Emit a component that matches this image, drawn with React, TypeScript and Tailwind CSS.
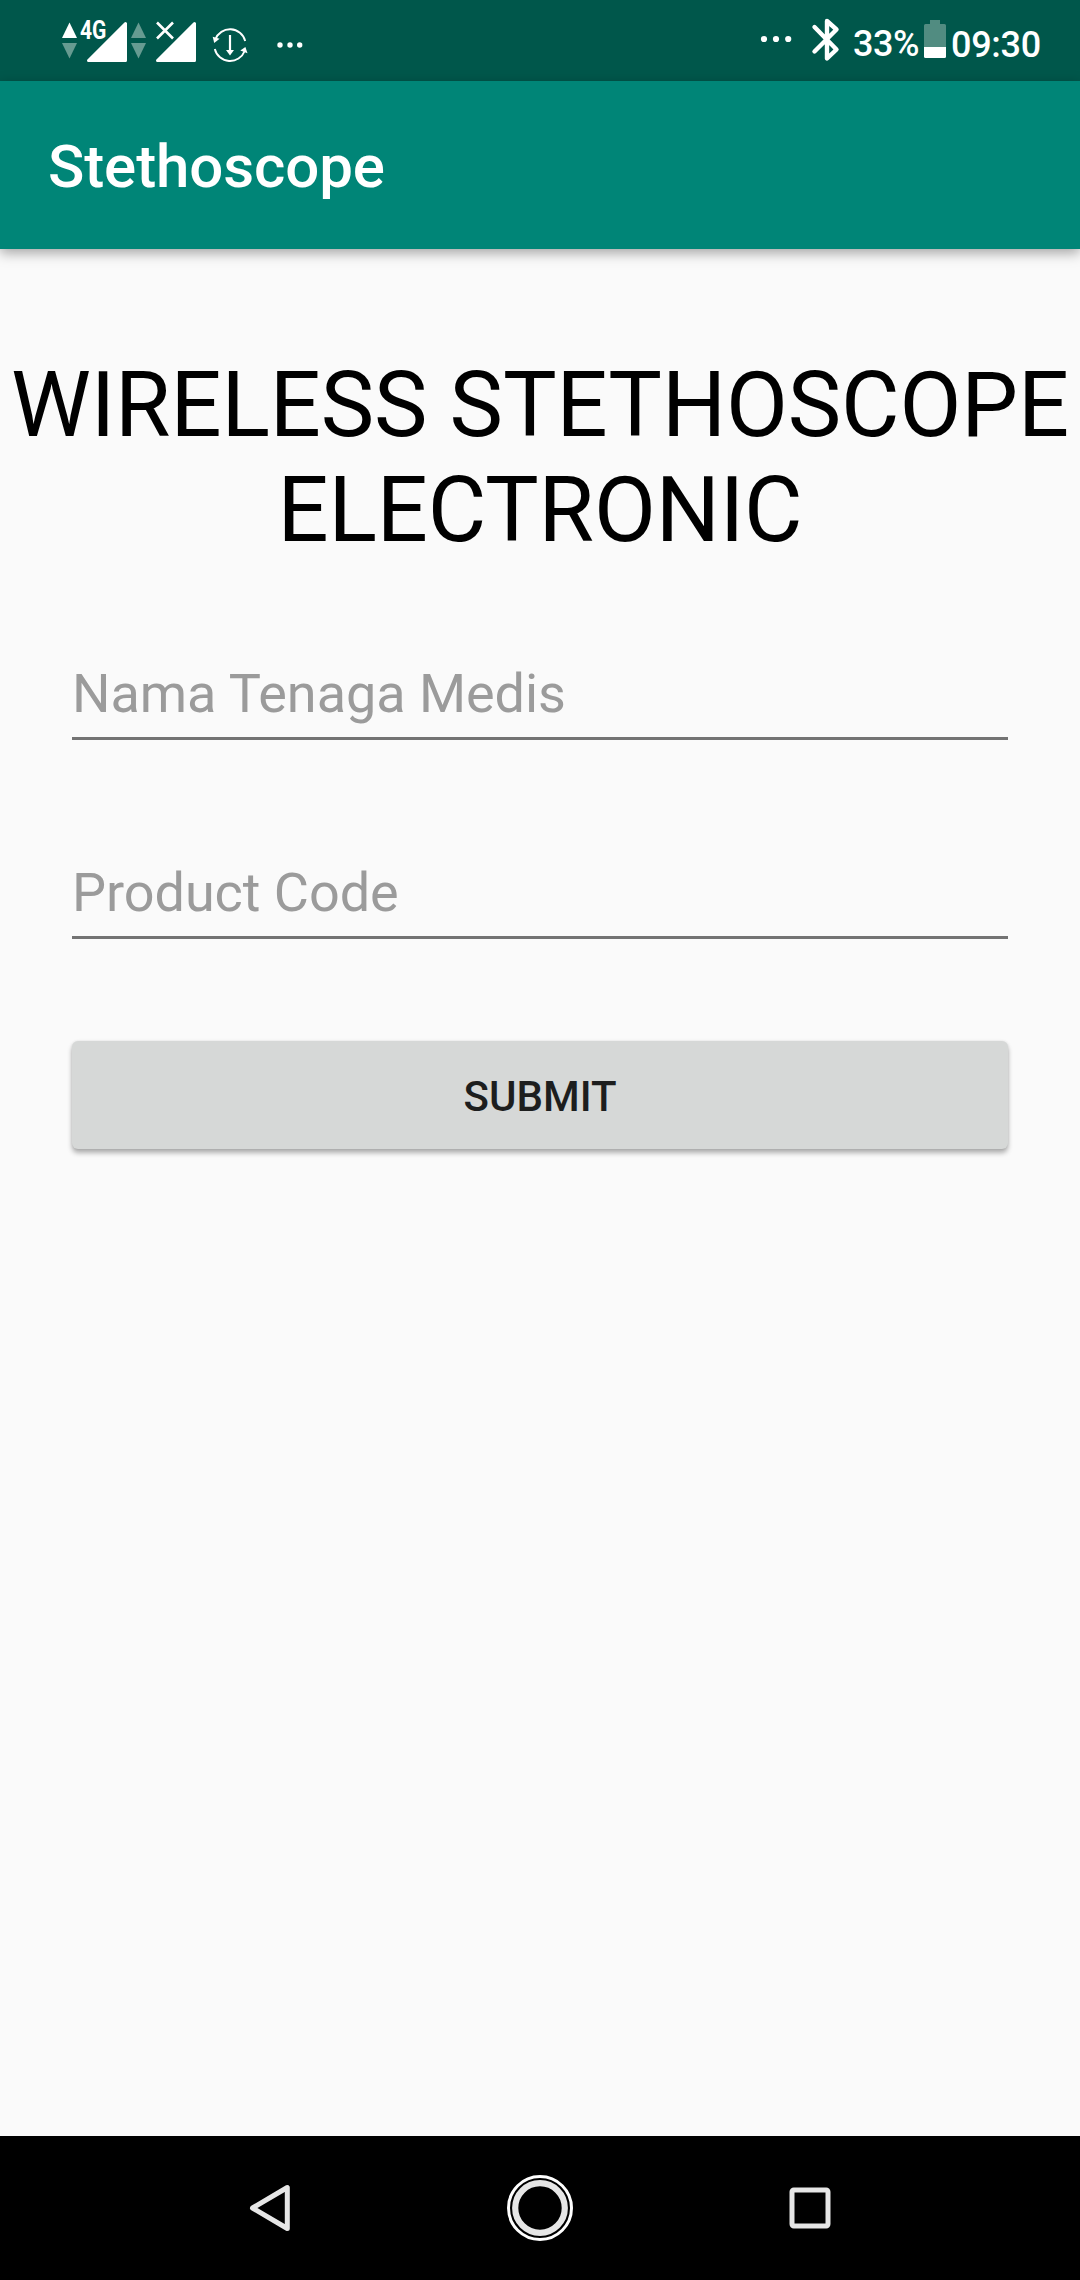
import React from "react";

function DataArrows({ up, className }: { up: string; className: string }) {
  return (
    <svg className={`h-[81px] w-[15px] shrink-0 ${className}`} viewBox="0 0 15 81">
      <path d="M7.5 22.5 15 38H0Z" fill={up} />
      <path d="M0 43h15L7.5 58.5Z" fill="#669b91" />
    </svg>
  );
}

function SignalWedge({ className }: { className: string }) {
  return (
    <svg className={`h-[81px] w-[40px] shrink-0 ${className}`} viewBox="0 0 40 81">
      <path d="M1.5 60.5 38.5 23.5V60.5Z" fill="#fff" stroke="#fff" strokeWidth="3" strokeLinejoin="round" />
    </svg>
  );
}

function SyncIcon() {
  return (
    <svg className="ml-[16px] h-[81px] w-[36px] shrink-0" viewBox="212 0 36 81" fill="none" stroke="#fff" strokeWidth="1.9">
      <path d="M215.3 39.5A15.7 15.7 0 0 1 245.2 41" />
      <path d="M214.8 49A15.7 15.7 0 0 0 244.7 51" />
      <path d="M230 35V51" strokeWidth="2.2" />
      <path d="M226 50h8l-4 5.5Z" fill="#fff" stroke="none" />
      <path d="M212.7 36.8 219.6 38.8 214.2 43Z" fill="#fff" stroke="none" />
      <path d="M240.3 50.6 245.4 47 247.5 53.2Z" fill="#fff" stroke="none" />
    </svg>
  );
}

function StatusBar() {
  return (
    <div className="flex h-[81px] items-start bg-[#00574b] text-white">
      <DataArrows up="#fff" className="ml-[62px]" />
      <div className="relative ml-[10px] h-[81px] w-[40px]">
        <SignalWedge className="block" />
        <span className="absolute top-[15px] left-[-7px] origin-left scale-x-[0.81] text-[26px] leading-[30px] font-bold">4G</span>
      </div>
      <DataArrows up="#669b91" className="ml-[4px]" />
      <div className="relative ml-[10px] h-[81px] w-[40px]">
        <SignalWedge className="block" />
        <svg className="absolute top-[21px] left-0 h-[19px] w-[18px]" viewBox="0 0 18 19">
          <path d="M1 1.5 17 17.5M17 1.5 1 17.5" stroke="#fff" strokeWidth="2.6" />
        </svg>
      </div>
      <SyncIcon />
      <svg className="ml-[29px] h-[81px] w-[26px]" viewBox="277 0 26 81" fill="#fff">
        <circle cx="280" cy="45" r="2.7" />
        <circle cx="290" cy="45" r="2.7" />
        <circle cx="299.7" cy="45" r="2.7" />
      </svg>

      <svg className="ml-auto h-[81px] w-[32px]" viewBox="760 0 32 81" fill="#fff">
        <circle cx="764" cy="39" r="3.1" />
        <circle cx="776" cy="39" r="3.1" />
        <circle cx="788.2" cy="39" r="3.1" />
      </svg>
      <svg className="ml-[18px] h-[81px] w-[32px]" viewBox="810 0 32 81" fill="none">
        <path d="M814.5 27 836.5 49.5 827 58.5V21L836.5 29.5 814.5 51.5" stroke="#fff" strokeWidth="4.4" strokeLinecap="round" strokeLinejoin="round" />
      </svg>
      <span className="ml-[11px] w-[71px] pt-[23px] text-[36px] leading-[42px] font-medium tracking-[-0.4px] whitespace-nowrap">33%</span>
      <svg className="h-[81px] w-[22px]" viewBox="0 0 22 81">
        <path d="M6 20h10v4h4.5q1.5 0 1.5 1.5V47H0V25.5Q0 24 1.5 24H6Z" fill="#518c81" />
        <path d="M0 47h22v9.5q0 1.5-1.5 1.5H1.5Q0 58 0 56.5Z" fill="#fff" />
      </svg>
      <span className="ml-[5px] w-[129px] pt-[24px] text-[36px] leading-[42px] font-medium tracking-[-0.3px]">09:30</span>
    </div>
  );
}

function Field({ label, className }: { label: string; className: string }) {
  return (
    <input
      type="text"
      aria-label={label}
      placeholder={label}
      className={`mx-[72px] block h-[80px] w-[936px] rounded-none border-b-[3px] border-[#737373] bg-transparent p-0 pb-[11px] text-[54px] leading-[63px] tracking-[-0.05px] outline-none placeholder:text-[#9b9b9b] placeholder:opacity-100 ${className}`}
    />
  );
}

function NavigationBar() {
  return (
    <nav className="flex h-[144px] items-center justify-center gap-[203px] bg-black">
      <svg className="h-[66px] w-[66px]" viewBox="0 0 66 66" fill="none">
        <path d="M14.5 33 49.3 12.5V53.5Z" stroke="#e6e6e6" strokeWidth="5" strokeLinejoin="round" />
      </svg>
      <svg className="h-[66px] w-[66px]" viewBox="0 0 66 66" fill="none">
        <circle cx="33" cy="33" r="31.5" stroke="#fff" strokeWidth="3" />
        <circle cx="33" cy="33" r="24.8" stroke="#e6e6e6" strokeWidth="6.2" />
      </svg>
      <svg className="h-[66px] w-[66px]" viewBox="0 0 66 66" fill="none">
        <rect x="16" y="14.9" width="36" height="36" rx="1.8" stroke="#e6e6e6" strokeWidth="5" />
      </svg>
    </nav>
  );
}

export default function App() {
  return (
    <div className="flex h-[2280px] w-[1080px] flex-col overflow-hidden bg-[#fafafa] font-['Roboto',sans-serif]">
      <StatusBar />
      <header className="flex h-[168px] items-center bg-[#008577] pl-[48px] shadow-[0_4px_12px_rgba(0,0,0,0.35)]">
        <span className="pt-[4px] text-[60px] leading-[70px] font-medium tracking-[-0.1px] text-white">Stethoscope</span>
      </header>
      <main className="flex-1 pt-[104px]">
        <h1 className="text-center text-[90px] leading-[105px] font-normal tracking-[-0.13px] whitespace-nowrap text-black">
          WIRELESS STETHOSCOPE
          <br />
          ELECTRONIC
        </h1>
        <Field label="Nama Tenaga Medis" className="mt-[97px]" />
        <Field label="Product Code" className="mt-[119px]" />
        <button className="mx-[72px] mt-[102px] flex h-[108px] w-[936px] items-center justify-center rounded-[6px] bg-[#d6d8d7] pt-[3px] text-[42px] leading-[49px] font-medium text-[#1d1e1e] shadow-[0_4px_5px_rgba(0,0,0,0.3),0_0_3px_rgba(0,0,0,0.1)]">
          SUBMIT
        </button>
      </main>
      <NavigationBar />
    </div>
  );
}
